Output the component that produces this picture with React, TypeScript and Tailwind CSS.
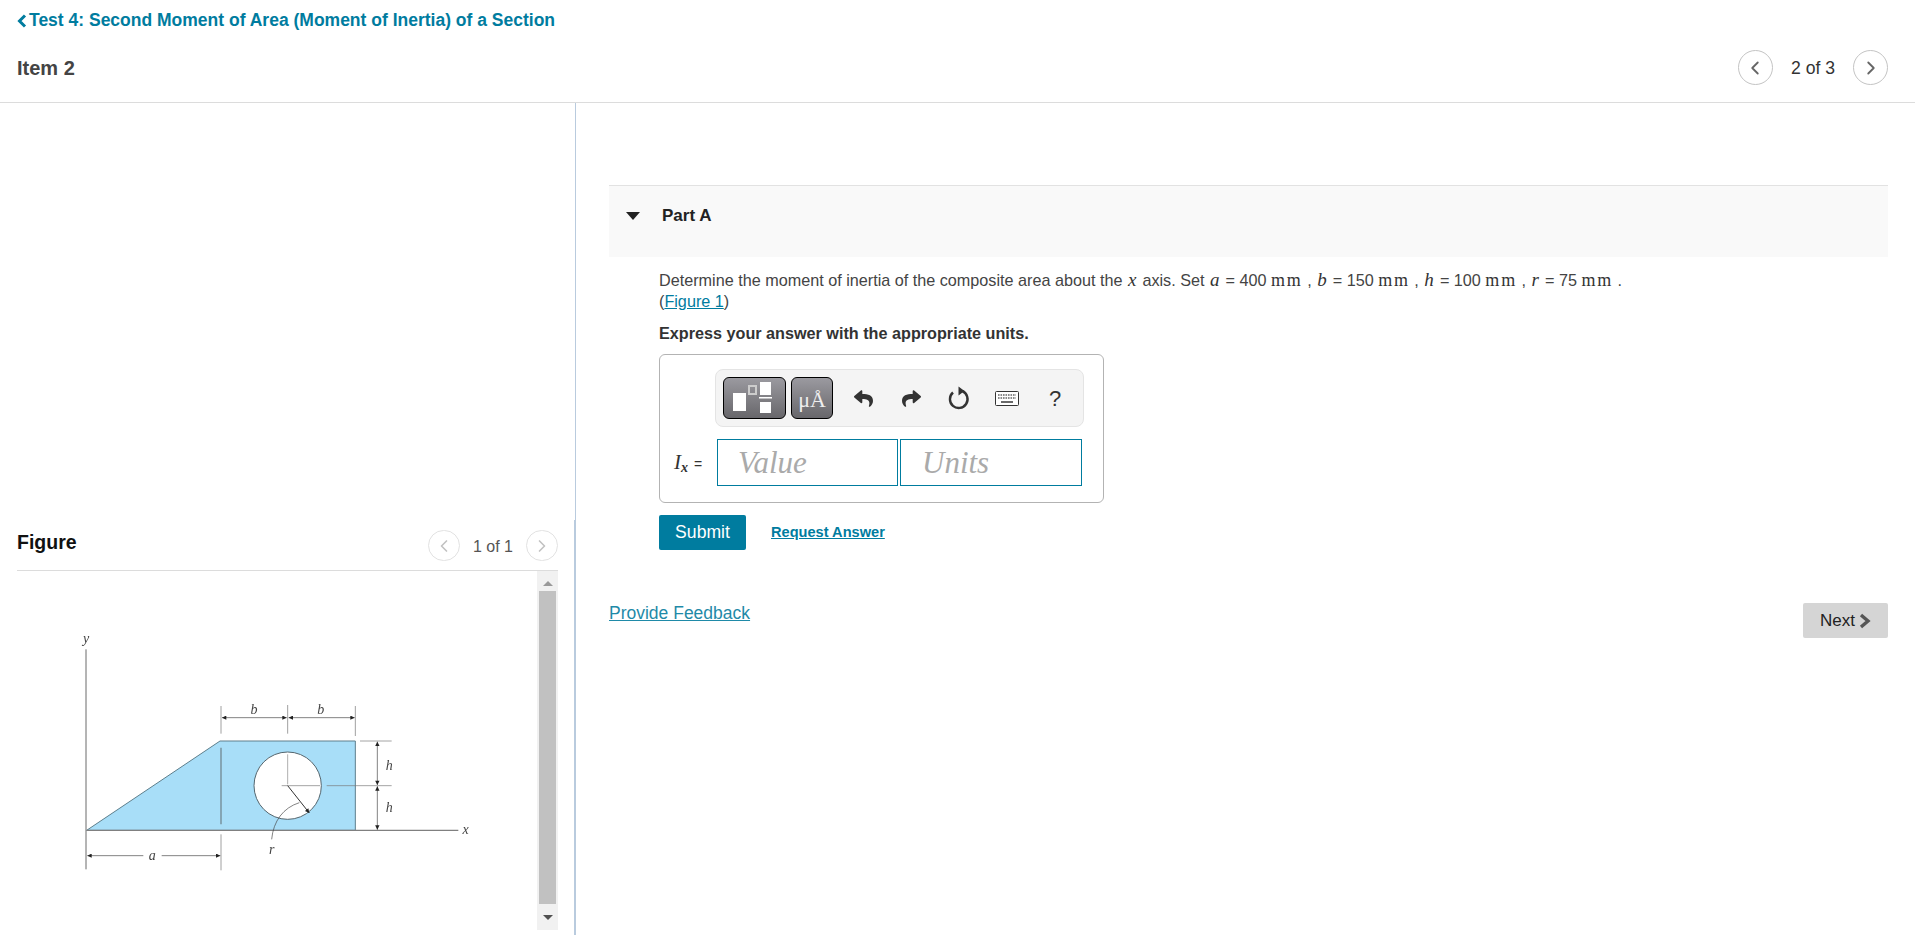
import React from 'react';
import { ChevronLeft, ChevronRight } from 'lucide-react';
import { FaReply, FaShare } from 'react-icons/fa';

function Pager({ label, size }: { label: string; size: 'lg' | 'sm' }) {
    const circle = size === 'lg'
        ? 'w-[35px] h-[35px] border-[#c4c4c4] text-[#666]'
        : 'w-[32px] h-[31px] border-[#e2e2e2] text-[#c2c2c2]';
    return (
        <div className={size === 'lg' ? 'flex items-center gap-[18px]' : 'flex items-center gap-[13px]'}>
            <span className={`flex items-center justify-center rounded-full border ${circle}`}>
                <ChevronLeft size={size === 'lg' ? 22 : 20} strokeWidth={2} />
            </span>
            <span className={size === 'lg' ? 'text-[17.6px] text-[#333] pt-[2px]' : 'text-[16px] text-[#555] pt-[2px]'}>{label}</span>
            <span className={`flex items-center justify-center rounded-full border ${circle}`}>
                <ChevronRight size={size === 'lg' ? 22 : 20} strokeWidth={2} />
            </span>
        </div>
    );
}

function Figure() {
    const line = '#6b6b6b';
    const labelCls = "[font-family:'Liberation_Serif',serif] italic";
    return (
        <svg width="430" height="270" viewBox="0 0 1290 810" className="blur-[0.4px]">
            <defs>
                <marker id="arr" viewBox="0 0 10 10" refX="10" refY="5" markerWidth="22" markerHeight="13" orient="auto-start-reverse" markerUnits="userSpaceOnUse">
                    <path d="M0 0L10 5L0 10Z" fill="#222" />
                </marker>
            </defs>
            <path d="M80 628L480 360H886V628Z" fill="#a8def8" stroke="#5e7f8c" strokeWidth="3" />
            <circle cx="683" cy="494" r="101" fill="#fff" stroke="#55666e" strokeWidth="3" />
            <path d="M78 85V745" stroke={line} strokeWidth="3" />
            <path d="M80 628H1195" stroke="#808080" strokeWidth="4" />
            <path d="M483 380V610" stroke="#7d9aa8" strokeWidth="5" />
            <path d="M483 640V748M483 255V338M683 252V338M886 255V345" stroke="#a0a0a0" strokeWidth="3" />
            <path d="M486 290H680" stroke="#444" strokeWidth="2" markerStart="url(#arr)" markerEnd="url(#arr)" />
            <path d="M686 290H884" stroke="#444" strokeWidth="2" markerStart="url(#arr)" markerEnd="url(#arr)" />
            <path d="M900 360H995M800 494H995M665 494H780" stroke="#777" strokeWidth="2" />
            <path d="M683 400V490" stroke="#888" strokeWidth="2" />
            <path d="M952 362V492" stroke="#444" strokeWidth="2" markerStart="url(#arr)" markerEnd="url(#arr)" />
            <path d="M952 496V626" stroke="#444" strokeWidth="2" markerStart="url(#arr)" markerEnd="url(#arr)" />
            <path d="M305 704H481" stroke="#444" strokeWidth="2" markerEnd="url(#arr)" />
            <path d="M82 704H250" stroke="#444" strokeWidth="2" markerStart="url(#arr)" />
            <path d="M683 494L748 576" stroke="#333" strokeWidth="3" markerEnd="url(#arr)" />
            <path d="M718 545C670 560 640 600 635 655" fill="none" stroke="#444" strokeWidth="2" />
            <g className={labelCls} fill="#444" fontSize="42" textAnchor="middle">
                <text x="78" y="66">y</text>
                <text x="582" y="278">b</text>
                <text x="782" y="278">b</text>
                <text x="988" y="448">h</text>
                <text x="988" y="572">h</text>
                <text x="277" y="718">a</text>
                <text x="635" y="700">r</text>
                <text x="1217" y="640">x</text>
            </g>
        </svg>
    );
}

function Toolbar() {
    return (
        <div className="ml-[55px] mt-[14px] w-[369px] h-[58px] rounded-[8px] border border-[#e4e4e4] bg-[#f4f4f4] flex items-center pl-[7px] text-[#333]">
            <span className="w-[63px] h-[42px] rounded-[6px] border border-black bg-gradient-to-b from-[#9b9aa0] to-[#68676b]">
                <svg width="61" height="40" viewBox="0 0 61 40">
                    <rect x="9" y="15" width="13" height="18" fill="#fff" />
                    <rect x="25" y="8" width="7" height="8" fill="none" stroke="#ccc" strokeWidth="2" />
                    <rect x="36" y="4" width="11" height="13" fill="#fff" />
                    <rect x="35" y="19" width="13" height="1.5" fill="#fff" />
                    <rect x="36" y="24" width="11" height="11" fill="#fff" />
                </svg>
            </span>
            <span className="ml-[5px] w-[42px] h-[42px] rounded-[6px] border border-black bg-gradient-to-b from-[#9b9aa0] to-[#68676b] flex items-center justify-center text-[#eee] text-[22px] [font-family:'Liberation_Serif',serif] leading-none pt-[3px]">
                μÅ
            </span>
            <span className="ml-[6px] w-[48px] flex justify-center"><FaReply size={19} /></span>
            <span className="w-[48px] flex justify-center"><FaShare size={19} /></span>
            <span className="w-[48px] flex justify-center">
                <svg width="22" height="24" viewBox="0 0 22 24" fill="none">
                    <path d="M14.5 5.2A8.8 8.8 0 1 1 5 6.5" stroke="#333" strokeWidth="2.4" />
                    <path d="M10.5 0.5L16.5 5L10.5 9.5Z" fill="#333" />
                </svg>
            </span>
            <span className="w-[48px] flex justify-center">
                <svg width="24" height="15" viewBox="0 0 24 15">
                    <rect x="0.5" y="0.5" width="23" height="14" rx="1" fill="#fff" stroke="#333" />
                    <path d="M3 4H21M3 7H21" stroke="#666" strokeWidth="1.6" strokeDasharray="1.6 0.9" />
                    <path d="M6 11H18" stroke="#444" strokeWidth="1.6" />
                </svg>
            </span>
            <span className="w-[48px] text-center text-[22px]">?</span>
        </div>
    );
}

function M({ children }: { children: React.ReactNode }) {
    return <span className="[font-family:'Liberation_Serif',serif] italic text-[19px] leading-none text-[#333] tracking-[0.03em] mx-[1px]">{children}</span>;
}

function U({ children }: { children: React.ReactNode }) {
    return <span className="[font-family:'Liberation_Serif',serif] text-[18px] leading-none text-[#333] tracking-[0.1em]">{children}</span>;
}

export default function App() {
    return (
        <div className="w-full h-[935px] overflow-hidden bg-white flex flex-col [font-family:'Liberation_Sans',Arial,sans-serif] text-[#333]">
            {/* Top bar */}
            <div className="h-[103px] shrink-0 border-b border-[#dcdcdc] pl-[17px] pr-[27px]">
                <a className="pt-[10px] flex items-center text-[17.5px] font-bold text-[#007c9f] leading-[21px]">
                    <svg width="10" height="14" viewBox="0 0 10 14" className="mr-[2px]" fill="none">
                        <path d="M8 1.5L2.5 7L8 12.5" stroke="currentColor" strokeWidth="3" />
                    </svg>
                    Test 4: Second Moment of Area (Moment of Inertia) of a Section
                </a>
                <div className="mt-[19px] flex items-center justify-between h-[35px]">
                    <span className="text-[20px] font-bold text-[#444]">Item 2</span>
                    <Pager label="2 of 3" size="lg" />
                </div>
            </div>

            <div className="flex-1 flex min-h-0">
                {/* Figure column */}
                <div className="w-[575px] shrink-0 pt-[417px]">
                    <div className="w-[575px] h-[415px] border-r border-[#b9cbde] pl-[17px] pr-[16px] pt-[10px]">
                        <div className="h-[41px] border-b border-[#dcdcdc] flex items-start justify-between">
                            <span className="text-[19.5px] font-bold text-[#111] leading-[24px]">Figure</span>
                            <Pager label="1 of 1" size="sm" />
                        </div>
                        <div className="h-[359px] flex">
                            <div className="flex-1 pl-[43px] pt-[50px]">
                                <Figure />
                            </div>
                            <div className="w-[21px] bg-[#f1f1f1] flex flex-col items-center">
                                <span className="h-[20px] pt-[4px] flex items-center justify-center text-[#999]">
                                    <svg width="10" height="5" viewBox="0 0 12 6"><path d="M6 0L12 6H0Z" fill="currentColor" /></svg>
                                </span>
                                <span className="w-[17px] h-[313px] bg-[#c1c1c1]" />
                                <span className="flex-1 flex items-center justify-center text-[#505050]">
                                    <svg width="10" height="5" viewBox="0 0 12 6"><path d="M0 0H12L6 6Z" fill="currentColor" /></svg>
                                </span>
                            </div>
                        </div>
                    </div>
                </div>

                {/* Question column */}
                <div className="flex-1 border-l border-[#b9cbde] pl-[33px] pr-[27px] pt-[82px]">
                    <div className="h-[72px] border-t border-[#e2e2e2] bg-[#f9f9f9] flex items-start pt-[19px] pl-[17px]">
                        <svg width="14" height="8" viewBox="0 0 14 8" className="mt-[7px]"><path d="M0 0H14L7 8Z" fill="#222" /></svg>
                        <span className="ml-[22px] text-[17px] font-bold text-[#222] leading-[21px]">Part A</span>
                    </div>

                    <div className="pl-[50px] pt-[13px]">
                        <p className="text-[16.2px] leading-[21px] text-[#444]">
                            Determine the moment of inertia of the composite area about the <M>x</M> axis. Set <M>a</M> = 400 <U>mm</U> , <M>b</M> = 150 <U>mm</U> , <M>h</M> = 100 <U>mm</U> , <M>r</M> = 75 <U>mm</U> .
                            <br />
                            (<a className="text-[#007c9f] underline">Figure 1</a>)
                        </p>
                        <p className="mt-[11px] text-[16.2px] font-bold leading-[21px] text-[#333]">Express your answer with the appropriate units.</p>

                        <div className="mt-[10px] w-[445px] h-[149px] rounded-[6px] border border-[#b3b3b3]">
                            <Toolbar />
                            <div className="mt-[12px] flex items-center">
                                <span className="w-[57px] pl-[14px] text-[#333] whitespace-nowrap">
                                    <span className="[font-family:'Liberation_Serif',serif] italic text-[21px]">I</span>
                                    <sub className="[font-family:'Liberation_Serif',serif] italic text-[14px] font-bold">x</sub>
                                    <span className="text-[14px] ml-[6px]">=</span>
                                </span>
                                <input readOnly placeholder="Value" className="w-[181px] h-[47px] border border-[#007c9f] pl-[20px] outline-none [font-family:'Liberation_Serif',serif] italic text-[31px] placeholder:text-[#aaa]" />
                                <input readOnly placeholder="Units" className="ml-[2px] w-[182px] h-[47px] border border-[#007c9f] pl-[21px] outline-none [font-family:'Liberation_Serif',serif] italic text-[31px] placeholder:text-[#aaa]" />
                            </div>
                        </div>

                        <div className="mt-[12px] flex items-center">
                            <button className="w-[87px] h-[35px] rounded-[2px] bg-[#007c9f] text-white text-[17.6px]">Submit</button>
                            <a className="ml-[25px] text-[14.6px] font-bold text-[#007c9f] underline">Request Answer</a>
                        </div>
                    </div>

                    <div className="mt-[53px] flex items-start justify-between">
                        <a className="text-[17.5px] leading-[20px] text-[#1f8aa8] underline">Provide Feedback</a>
                        <button className="w-[85px] h-[35px] rounded-[2px] bg-[#d5d5d5] flex items-center justify-center text-[17px] text-[#222]">
                            Next
                            <svg width="12" height="16" viewBox="0 0 12 16" className="ml-[4px]" fill="none">
                                <path d="M2 2L9 8L2 14" stroke="#555" strokeWidth="3.4" />
                            </svg>
                        </button>
                    </div>
                </div>
            </div>
        </div>
    );
}
